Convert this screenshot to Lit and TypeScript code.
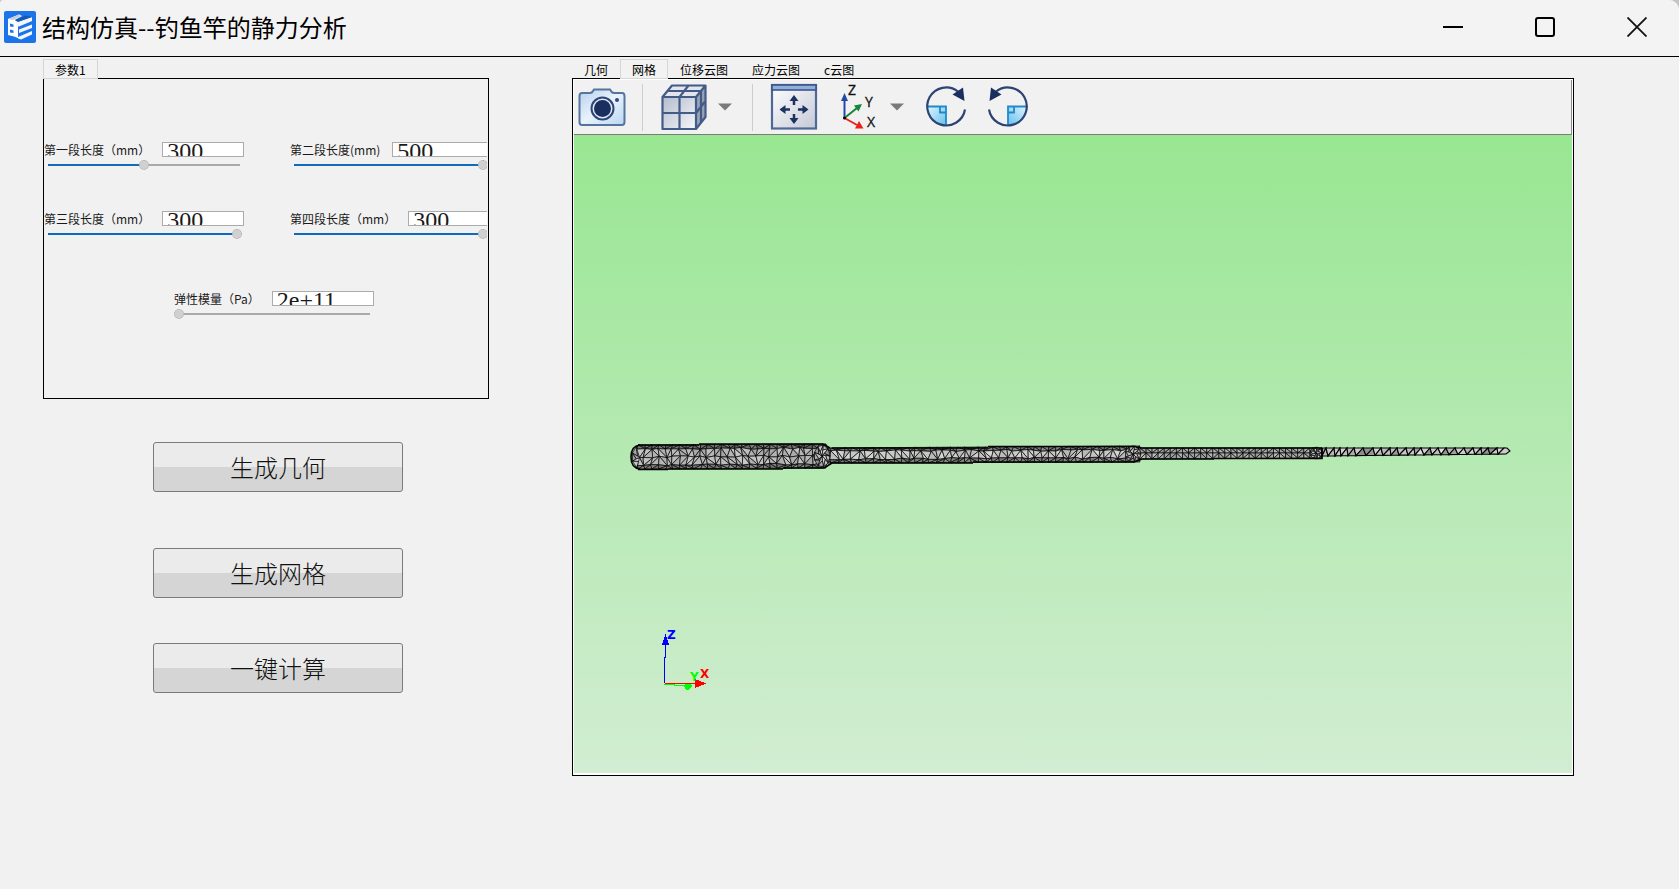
import { LitElement, html, svg, css } from "lit";
import { customElement, property, state } from "lit/decorators.js";
import { classMap } from "lit/directives/class-map.js";

interface Param {
  id: string;
  label: string;
  value: string;
  ratio: number;
}

const PARAMS: Param[] = [
  { id: "len1", label: "第一段长度（mm）", value: "300", ratio: 500 },
  { id: "len2", label: "第二段长度(mm)", value: "500", ratio: 989 },
  { id: "len3", label: "第三段长度（mm）", value: "300", ratio: 989 },
  { id: "len4", label: "第四段长度（mm）", value: "300", ratio: 989 },
  { id: "modulus", label: "弹性模量（Pa）", value: "2e+11", ratio: 0 },
];

const VIEW_TABS = ["几何", "网格", "位移云图", "应力云图", "c云图"];

/* One labelled number box with its slider. */
@customElement("param-field")
export class ParamField extends LitElement {
  @property({ attribute: false }) param!: Param;
  @state() private ratio = -1;

  static styles = css`
    :host {
      display: block;
      width: 200px;
    }
    .row {
      display: flex;
      align-items: center;
      gap: 12px;
      height: 15px;
    }
    .label {
      flex: none;
      font-size: 12px;
      line-height: 15px;
      white-space: nowrap;
      color: #1a1a1a;
    }
    .box {
      flex: 1;
      min-width: 0;
      height: 15px;
      box-sizing: border-box;
      padding: 2px 4px 0;
      border: 1px solid #ababab;
      border-radius: 0;
      background: #fff;
      color: #1a1a1a;
      font: 24px/28px "Liberation Serif", serif;
      outline: none;
    }
    .slider {
      -webkit-appearance: none;
      appearance: none;
      display: block;
      width: 100%;
      height: 16px;
      margin: 0;
      background-image: linear-gradient(#0f6cbd, #0f6cbd), linear-gradient(#a9a9a9, #a9a9a9);
      background-repeat: no-repeat;
      background-position: 4px 7px;
      background-size: calc(var(--ratio) * (100% - 10px)) 2px, calc(100% - 8px) 2px;
      background-color: transparent;
    }
    .slider::-webkit-slider-thumb {
      -webkit-appearance: none;
      width: 10px;
      height: 10px;
      border-radius: 50%;
      border: 1px dotted #ababab;
      box-sizing: border-box;
      background: #d0d0d0;
    }
  `;

  private onInput(e: Event) {
    this.ratio = Number((e.target as HTMLInputElement).value);
  }

  render() {
    const p = this.param;
    const r = this.ratio < 0 ? p.ratio : this.ratio;
    return html`
      <div class="row">
        <label class="label" for=${p.id}>${p.label}</label>
        <input class="box" id=${p.id} type="text" .value=${p.value} />
      </div>
      <input
        class="slider"
        type="range"
        min="0"
        max="1000"
        aria-label=${p.label}
        .value=${String(r)}
        style="--ratio: ${r / 1000}"
        @input=${this.onInput}
      />
    `;
  }
}

/* Deterministic noise so that the mesh is the same on each load. */
function noise(seed: number) {
  let s = seed;
  return () => {
    s = (s * 1664525 + 1013904223) % 4294967296;
    return s / 4294967296;
  };
}

interface Section {
  x0: number;
  x1: number;
  step: number;
  rows0: number[];
  rows1: number[];
  shades: number[];
  jitter: number;
}

/* Rod sections from the handle to the tip; rows run from the top edge to the bottom edge. */
const JOINT_ROD: Section = {
  x0: 250, x1: 566, step: 7, rows0: [313, 316, 324, 328], rows1: [311, 315, 323, 327], shades: [125, 200, 130], jitter: 1,
};
const THIN_ROD: Section = {
  x0: 566, x1: 748, step: 6, rows0: [313, 318, 324], rows1: [313, 318, 323], shades: [165, 170], jitter: 0,
};
const HANDLE: Section = {
  x0: 64, x1: 252, step: 7, rows0: [310, 314, 322, 330, 334], rows1: [309, 313, 321, 329, 333], shades: [110, 180, 185, 125], jitter: 1,
};

function meshSection(sec: Section, seed: number) {
  const rnd = noise(seed);
  const cols = Math.round((sec.x1 - sec.x0) / sec.step);
  const last = sec.rows0.length - 1;
  const pts: number[][][] = [];
  for (let c = 0; c <= cols; c++) {
    const t = c / cols;
    pts.push(
      sec.rows0.map((y, i) => {
        const inner = i > 0 && i < last;
        const base = y + (sec.rows1[i] - y) * t;
        const dx = inner ? (rnd() - 0.5) * 4 * sec.jitter : 0;
        const dy = inner ? (rnd() - 0.5) * 2 * sec.jitter : 0;
        return [sec.x0 + t * (sec.x1 - sec.x0) + dx, base + dy];
      })
    );
  }
  const tri = (a: number[], b: number[], c: number[], shade: number) => {
    const g = Math.round(shade + (rnd() - 0.5) * 34);
    const d = [a, b, c].map((p) => p.map((n) => n.toFixed(1)).join(" ")).join("L");
    return svg`<path d="M${d}Z" fill="rgb(${g},${g},${g})" />`;
  };
  const out = [];
  for (let c = 0; c < cols; c++) {
    for (let r = 0; r < last; r++) {
      const [a, b, d, e] = [pts[c][r], pts[c + 1][r], pts[c][r + 1], pts[c + 1][r + 1]];
      const s = sec.shades[r];
      if (rnd() > 0.5) out.push(tri(a, b, d, s), tri(b, e, d, s));
      else out.push(tri(a, b, e, s), tri(a, e, d, s));
    }
  }
  return out;
}

/* The thinnest section is a single strip of alternating triangles. */
function meshTip() {
  const rnd = noise(77);
  const out = [];
  let top = [748, 313];
  let low = [748, 321];
  let up = true;
  for (let x = 752; x <= 930; x += up ? 5 + Math.round(rnd() * 2) : 1 + Math.round(rnd() * 2)) {
    const t = (x - 748) / 182;
    const next = up ? [x, 313] : [x, 321 - t * 2];
    const g = Math.round(140 + rnd() * 85);
    out.push(svg`<path d="M${top.join(" ")}L${low.join(" ")}L${next[0]} ${next[1].toFixed(1)}Z" fill="rgb(${g},${g},${g})" />`);
    if (up) top = next;
    else low = next;
    up = !up;
  }
  out.push(svg`<path d="M${top.join(" ")}L933 313L936 316L932 319L${low.join(" ")}Z" fill="#ccc" />`);
  return out;
}

/* Vertices packed round the joints and the handle end. */
function meshCap(cx: number, cy: number, rx: number, ry: number, seed: number) {
  const rnd = noise(seed);
  const n = 9;
  const rim = Array.from({ length: n }, (_, i) => {
    const a = (i / n) * Math.PI * 2;
    return [cx + Math.cos(a) * rx, cy + Math.sin(a) * ry];
  });
  const mid = rim.map(([x, y]) => [cx + (x - cx) * 0.5 + rnd() * 2 - 1, cy + (y - cy) * 0.5 + rnd() * 2 - 1]);
  const f = (p: number[]) => p.map((v) => v.toFixed(1)).join(" ");
  return rim.map((p, i) => {
    const j = (i + 1) % n;
    const g = Math.round(140 + rnd() * 60);
    return svg`
      <path d="M${f(p)}L${f(rim[j])}L${f(mid[i])}Z" fill="rgb(${g},${g},${g})" />
      <path d="M${f(mid[i])}L${f(rim[j])}L${f(mid[j])}L${cx} ${cy}Z" fill="rgb(${g + 20},${g + 20},${g + 20})" />`;
  });
}

/* 3D viewport: the meshed rod and the orientation triad. */
@customElement("mesh-view")
export class MeshView extends LitElement {
  static styles = css`
    :host {
      display: flex;
      flex: 1;
      min-height: 0;
      background: linear-gradient(#98e692, #d2edd2);
    }
    .scene {
      flex: 1;
      min-width: 0;
      min-height: 0;
      width: 100%;
      height: 100%;
    }
    .mesh {
      stroke: #000;
      stroke-width: 0.7;
    }
    .edge {
      fill: none;
      stroke: #000;
      stroke-width: 1.6;
    }
    .axis {
      font: bold 12px "DejaVu Sans", sans-serif;
    }
  `;

  render() {
    return html`
      <svg class="scene" viewBox="0 0 998 638" role="img" aria-label="网格">
        <g class="mesh">
          ${meshSection(THIN_ROD, 5)}
          ${meshCap(742, 318, 6, 6, 15)}
          ${meshSection(JOINT_ROD, 9)}
          ${meshCap(559, 319, 8, 8, 21)}
          ${meshCap(67, 322, 9, 12, 31)}
          ${meshSection(HANDLE, 3)}
          ${meshCap(248, 321, 8, 11, 42)}
        </g>
        <g stroke="#000" stroke-width="1.100">${meshTip()}</g>
        <g class="edge">
          <path d="M66 310 Q57 311 57 322 Q57 333 66 334" />
          <path d="M64 310H125M125 309H249M64 334.500H94M94 334H209M209 333H250" />
          <path d="M249 309L256 313M250 333L258 328" />
          <path d="M258 313H414M414 311.500H562M258 328H399M399 327H560" />
          <path d="M562 312L568 313M560 327L568 324" />
          <path d="M568 313H748M568 324H640M640 323.500H748V313" />
        </g>
        <g shape-rendering="crispEdges">
          <path d="M90.500 548V522H91.500V508" fill="none" stroke="#00f" />
          <path d="M91.500 499L95 509.500H88Z" fill="#00f" />
          <path d="M90 549.500H100V550.500H112" fill="none" stroke="#0f0" />
          <path d="M110 551.500L112 548H115L118 551L115 555H112Z" fill="#0f0" />
          <path d="M91 548.500H122" fill="none" stroke="#f00" />
          <path d="M121 544L132 548.500L121 553Z" fill="#f00" />
        </g>
        <text class="axis" x="93" y="504" fill="#00f">Z</text>
        <text class="axis" x="116" y="546" fill="#0f0">Y</text>
        <text class="axis" x="126" y="543" fill="#f00">X</text>
      </svg>
    `;
  }
}

const cameraIcon = svg`
  <defs>
    <linearGradient id="cam" x1="0" y1="0" x2="1" y2="1">
      <stop offset="0" stop-color="#b5d0ee" /><stop offset="0.5" stop-color="#e9f3fc" /><stop offset="1" stop-color="#b9d6f2" />
    </linearGradient>
  </defs>
  <path d="M4 10H12Q14 10 15 8L16 6.500H32L33 8Q34 10 36 10H44Q46.500 10 46.500 13V39Q46.500 42 44 42H4Q1.500 42 1.500 39V13Q1.500 10 4 10Z" fill="url(#cam)" stroke="#55759f" stroke-width="2" />
  <circle cx="24.500" cy="25.500" r="11" fill="#dcebf8" stroke="#2f4474" stroke-width="2" />
  <circle cx="24.500" cy="25.500" r="8.500" fill="#1b2f5f" />
  <circle cx="39" cy="17" r="2" fill="#2f4a80" />`;

const cubeIcon = svg`
  <defs>
    <linearGradient id="cube" x1="0" y1="0" x2="1" y2="1">
      <stop offset="0" stop-color="#b3bccd" /><stop offset="1" stop-color="#f5f6f9" />
    </linearGradient>
  </defs>
  <path d="M2.500 14L12 2.500H45.500L36 14Z" fill="#e2e5ec" />
  <path d="M36 14L45.500 2.500V34L36 46Z" fill="#9aa2b5" />
  <path d="M2.500 14H36V46H2.500Z" fill="url(#cube)" />
  <path d="M2.500 14L12 2.500H45.500V34L36 46H2.500ZM2.500 14H36V46M36 14L45.500 2.500M19.500 46V14L28.500 2.500M2.500 30H36L45.500 18M7 8H41V40" fill="none" stroke="#435b87" stroke-width="2.200" stroke-linejoin="round" />`;

const fitIcon = svg`
  <defs>
    <linearGradient id="fit" x1="0" y1="0" x2="1" y2="1">
      <stop offset="0" stop-color="#fff" /><stop offset="1" stop-color="#c5c9d6" />
    </linearGradient>
  </defs>
  <rect x="2" y="2" width="44" height="43.500" fill="url(#fit)" stroke="#4f6896" stroke-width="2.200" />
  <rect x="2" y="2" width="44" height="5" fill="#8fb0dc" stroke="#3c5787" stroke-width="1.600" />
  <path d="M24 14V22M24 31V39M11 26.500H20M28 26.500H37" stroke="#1d3260" stroke-width="2.500" />
  <path d="M24 12L28.500 18H19.500ZM24 41L28.500 35H19.500ZM9.500 26.500L15.500 22V31ZM38.500 26.500L32.500 22V31Z" fill="#1d3260" />`;

const axesIcon = svg`
  <path d="M12.500 35V17" stroke="#2248a8" stroke-width="2" />
  <path d="M12.500 10L16 18H9Z" fill="#2248a8" />
  <path d="M12.500 35L25 25" stroke="#15853a" stroke-width="2" />
  <path d="M30 21L26.500 28.500L22 22.500Z" fill="#15853a" />
  <path d="M12.500 35L25 42" stroke="#e8221c" stroke-width="2" />
  <path d="M31.500 45.500L23 45.500L27 38Z" fill="#e8221c" />
  <circle cx="12.500" cy="35" r="1.500" fill="#000" />
  <text class="glyph" x="16" y="12">Z</text>
  <text class="glyph" x="33" y="24">Y</text>
  <text class="glyph" x="35" y="44">X</text>`;

const rotateIcon = (flip: boolean) => svg`
  <defs>
    <linearGradient id="rot" x1="0" y1="0" x2="1" y2="1">
      <stop offset="0" stop-color="#e2f4fd" /><stop offset="1" stop-color="#63c0ee" />
    </linearGradient>
  </defs>
  <g transform=${flip ? "translate(48 0.5) scale(-1 1)" : "translate(0 0.5)"}>
    <path d="M24 23H5Q6 41 24 42Z" fill="url(#rot)" />
    <path d="M5 23H24V42M18 23V29H24" fill="none" stroke="#2189c9" stroke-width="1.800" />
    <path d="M43 26A19 19 0 1 1 36 8" fill="none" stroke="#2c4373" stroke-width="2.200" />
    <path d="M30.500 11L41 4L42.500 17.500Z" fill="#1b2f5f" />
  </g>`;

@customElement("app-root")
export class AppRoot extends LitElement {
  @state() private active = 1;

  static styles = css`
    :host {
      display: flex;
      flex-direction: column;
      min-height: 100vh;
      background: #c4c4c4;
      color: #000;
      font-family: "Noto Sans CJK SC", "Noto Sans", sans-serif;
    }
    .window {
      flex: 1;
      display: flex;
      flex-direction: column;
      border-radius: 4px 10px 0 0;
      background: #f1f1f1;
    }
    .titlebar {
      display: flex;
      align-items: center;
      height: 54px;
      padding: 0 0 2px 4px;
      border-bottom: 1px solid #000;
      border-radius: 4px 10px 0 0;
      background: #f3f3f3;
    }
    .logo {
      width: 32px;
      height: 32px;
      margin-right: 6px;
    }
    .title {
      flex: 1;
      margin: 0;
      font-size: 24px;
      line-height: 32px;
      font-weight: 400;
    }
    .controls {
      display: flex;
      gap: 8px;
    }
    .control {
      display: flex;
      align-items: center;
      justify-content: center;
      width: 84px;
      height: 52px;
      padding: 0;
      border: 0;
      background: none;
    }
    .main {
      flex: 1;
      display: grid;
      grid-template-columns: 446fr 1002fr;
      column-gap: 83px;
      padding: 2px 105px 113px 43px;
    }
    .column {
      display: flex;
      flex-direction: column;
      min-width: 0;
    }
    .tabs {
      display: flex;
      height: 20px;
      z-index: 1;
      margin-bottom: -1px;
    }
    .tab {
      height: 20px;
      padding: 0 11px;
      border: 1px solid transparent;
      background: none;
      color: #000;
      font-family: inherit;
      font-size: 12px;
      line-height: 20px;
      white-space: nowrap;
    }
    .selected {
      border-color: #d6d6d6;
      background: #f2f2f2;
    }
    .params {
      border: 1px solid #000;
      padding: 63px 1px 76px 0;
    }
    .fields {
      display: grid;
      grid-template-columns: 200px 200px;
      column-gap: 46px;
      row-gap: 38px;
      overflow: hidden;
    }
    .wide {
      grid-column: 1 / 3;
      margin: 11px 0 0 130px;
    }
    .actions {
      display: flex;
      flex-direction: column;
      width: 250px;
      margin: 43px 0 0 110px;
    }
    .action {
      height: 50px;
      padding: 0;
      border: 1px solid #7a7a7a;
      border-radius: 3px;
      background: linear-gradient(#ebebeb 0 51%, #d5d5d5 51% 100%);
      color: #111;
      font-family: inherit;
      font-weight: 300;
      font-size: 24px;
      line-height: 32px;
    }
    .mesh-action {
      margin: 56px 0 45px;
    }
    .viewer {
      flex: 1;
      display: flex;
      flex-direction: column;
      border: 1px solid #000;
      padding: 1px 1px 2px;
      background: #fff;
    }
    .toolbar {
      display: flex;
      align-items: center;
      height: 54px;
      padding-left: 4px;
      border-bottom: 1px solid #7b7b7b;
      border-right: 1px solid #8a8a8a;
      background: #f1f1f1;
    }
    .tool {
      display: flex;
      align-items: center;
      gap: 8px;
      padding: 0;
      border: 0;
      background: none;
    }
    .tool + .tool {
      margin-left: 14px;
    }
    .icon {
      display: block;
      width: 48px;
      height: 48px;
      overflow: visible;
    }
    .caret {
      width: 20px;
      height: 8px;
      fill: #7a7a7a;
    }
    .divider {
      width: 1px;
      height: 47px;
      margin: 0 17px 0 16px;
      background: #cdcdcd;
    }
    .glyph {
      font: 14px "Open Sans", sans-serif;
      fill: #111;
      stroke: #111;
      stroke-width: 0.3;
    }
  `;

  private caret() {
    return html`<svg class="caret" viewBox="0 0 20 8"><path d="M2 0.500H16L9 7.500Z" /></svg>`;
  }

  private icon(content: unknown) {
    return html`<svg class="icon" viewBox="0 0 48 48">${content}</svg>`;
  }

  render() {
    return html`
      <div class="window">
        <header class="titlebar">
          <svg class="logo" viewBox="0 0 32 32">
            <rect width="32" height="32" rx="2" fill="#1b74ea" />
            <path d="M4 8L15 3.500L18 5L11 9L14 11V27L10 25.500L4 24Z" fill="#fff" />
            <path d="M4 8L15 3.500L16 6L9 9Z" fill="#c9ced6" />
            <path d="M6 12.500L9.500 13.500V16L6 15.500ZM6 18.500L9.500 19.500V22L6 21.500Z" fill="#1b74ea" />
            <path d="M12 11L28 6V10L15 15.500L12 14.500ZM15 18.500L28 13.500V17L15 22ZM14 26L28 20V23.500L17 28.500L14 27.500Z" fill="#f4f7fc" />
            <path d="M11 9L22 4.500L28 6L14 11Z" fill="#1559b8" />
          </svg>
          <h1 class="title">结构仿真--钓鱼竿的静力分析</h1>
          <div class="controls">
            <button class="control" aria-label="最小化">
              <svg width="20" height="20" viewBox="0 0 20 20"><path d="M0 10H20" stroke="#000" stroke-width="2" /></svg>
            </button>
            <button class="control" aria-label="最大化">
              <svg width="20" height="20" viewBox="0 0 20 20"><rect x="1" y="1" width="18" height="18" rx="2" fill="none" stroke="#000" stroke-width="2" /></svg>
            </button>
            <button class="control" aria-label="关闭">
              <svg width="20" height="20" viewBox="0 0 20 20"><path d="M0.500 0.500L19.500 19.500M19.500 0.500L0.500 19.500" stroke="#111" stroke-width="1.800" /></svg>
            </button>
          </div>
        </header>

        <main class="main">
          <section class="column">
            <div class="tabs" role="tablist">
              <button class="tab selected" role="tab" aria-selected="true">参数1</button>
            </div>
            <div class="params">
              <div class="fields">
                ${PARAMS.map((p, i) => html`<param-field class=${classMap({ wide: i === 4 })} .param=${p}></param-field>`)}
              </div>
            </div>
            <div class="actions">
              <button class="action">生成几何</button>
              <button class="action mesh-action">生成网格</button>
              <button class="action">一键计算</button>
            </div>
          </section>

          <section class="column">
            <div class="tabs" role="tablist">
              ${VIEW_TABS.map(
                (name, i) => html`<button
                  class=${classMap({ tab: true, selected: i === this.active })}
                  role="tab"
                  aria-selected=${i === this.active ? "true" : "false"}
                  @click=${() => (this.active = i)}
                >${name}</button>`
              )}
            </div>
            <div class="viewer">
              <div class="toolbar">
                <button class="tool" aria-label="截图">${this.icon(cameraIcon)}</button>
                <span class="divider"></span>
                <button class="tool" aria-label="显示模式">${this.icon(cubeIcon)}${this.caret()}</button>
                <span class="divider"></span>
                <button class="tool" aria-label="适应窗口">${this.icon(fitIcon)}</button>
                <button class="tool" aria-label="视图方向">${this.icon(axesIcon)}${this.caret()}</button>
                <button class="tool" aria-label="顺时针旋转">${this.icon(rotateIcon(false))}</button>
                <button class="tool" aria-label="逆时针旋转">${this.icon(rotateIcon(true))}</button>
              </div>
              <mesh-view></mesh-view>
            </div>
          </section>
        </main>
      </div>
    `;
  }
}
